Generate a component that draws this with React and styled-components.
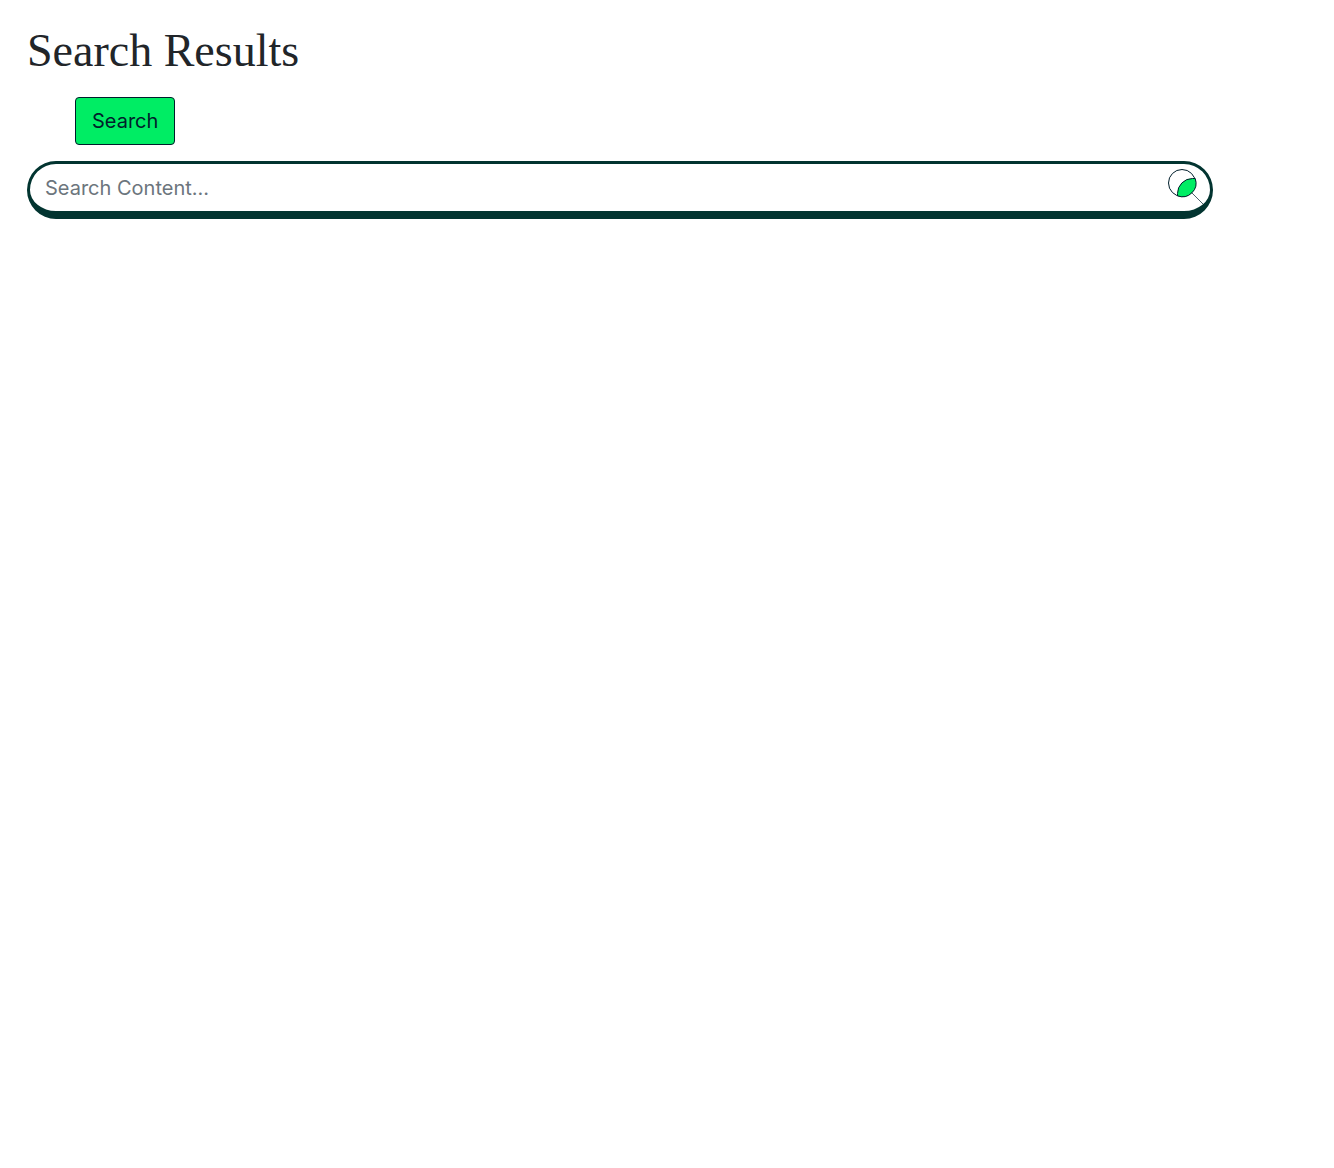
import React from "react";
import styled, { createGlobalStyle } from "styled-components";

const GlobalStyle = createGlobalStyle`
  *, *::before, *::after { box-sizing: border-box; }
  body {
    margin: 0;
    background: #fff;
    color: #212529;
    font-family: Inter, "Liberation Sans", sans-serif;
    font-size: 20px;
    line-height: 30px;
  }
`;

const Page = styled.main`
  max-width: 1280px;
  margin: 0 auto;
  padding: 24px 94px 24px 0;
`;

const Title = styled.h1`
  margin: 0 0 19px;
  font-family: "Liberation Serif", serif;
  font-size: 46px;
  font-weight: 400;
  line-height: 54px;
`;

const SearchForm = styled.form`
  display: flex;
  flex-direction: column;
  align-items: flex-start;
  gap: 16px;
`;

const SubmitButton = styled.button`
  margin-left: 48px;
  padding: 8px 16px;
  border: 1px solid #001e2b;
  border-radius: 4px;
  background: #00ed64;
  color: #001e2b;
  font: inherit;
  cursor: pointer;
`;

const SearchBar = styled.div`
  display: flex;
  align-items: center;
  width: 100%;
  height: 58px;
  border: 3px solid #023430;
  border-bottom-width: 8px;
  border-radius: 29px;
  background: #fff;
`;

const SearchInput = styled.input`
  flex: 1;
  min-width: 0;
  padding: 8px 15px;
  border: 0;
  outline: 0;
  background: transparent;
  color: #212529;
  font: inherit;

  &::placeholder {
    color: #6c757d;
    opacity: 1;
  }
`;

const IconButton = styled.button`
  display: flex;
  margin-right: 4px;
  padding: 0;
  border: 0;
  background: transparent;
  cursor: pointer;
`;

function LeafSearchIcon() {
  return (
    <svg width="40" height="40" viewBox="0 0 40 40" fill="none" stroke="#001e2b" aria-hidden="true">
      <circle cx="16" cy="15" r="13.5" />
      <path
        d="M29.2 10.5H26.5A15 15 0 0 0 11.5 25.5V27.8A13.6 13.6 0 0 0 29.2 10.5Z"
        fill="#00ed64"
      />
      <path d="M25.6 24.6L37.5 36.5" strokeWidth="0.7" />
    </svg>
  );
}

export default function App() {
  return (
    <>
      <GlobalStyle />
      <Page>
        <Title>Search Results</Title>
        <SearchForm role="search" onSubmit={(event) => event.preventDefault()}>
          <SubmitButton type="submit">Search</SubmitButton>
          <SearchBar>
            <SearchInput type="text" name="query" aria-label="Search content" placeholder="Search Content..." />
            <IconButton type="submit" aria-label="Submit search">
              <LeafSearchIcon />
            </IconButton>
          </SearchBar>
        </SearchForm>
      </Page>
    </>
  );
}
